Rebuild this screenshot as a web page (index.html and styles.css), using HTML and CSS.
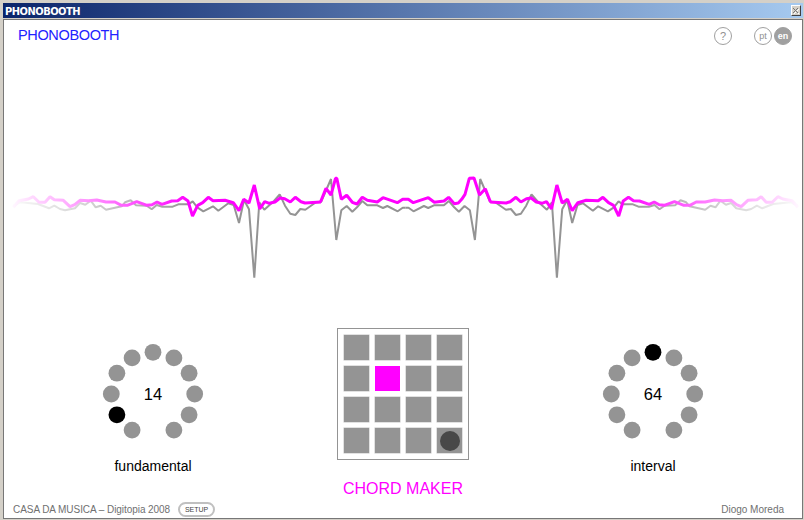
FILE: index.html
```html
<!DOCTYPE html>
<html lang="en">
<head>
<meta charset="utf-8">
<title>PHONOBOOTH</title>
<link rel="stylesheet" href="styles.css">
</head>
<body>
<div class="window">
  <header class="titlebar">
    <span class="title">PHONOBOOTH</span>
    <button class="close" aria-label="Close"><svg width="8" height="8" viewBox="0 0 8 8"><path d="M2 2l5 5M7 2L2 7" stroke="#fff"/><path d="M1 1l5 5M6 1L1 6" stroke="#777"/></svg></button>
  </header>
  <main class="client">
    <div class="top">
      <h1 class="brand">PHONOBOOTH</h1>
      <nav class="tools">
        <span class="round help">?</span>
        <span class="round">pt</span>
        <span class="round active">en</span>
      </nav>
    </div>
    <svg class="wave" width="798" height="130" viewBox="4 165 798 130">
      <defs>
        <linearGradient id="fade" gradientUnits="userSpaceOnUse" x1="8" y1="0" x2="803" y2="0">
          <stop offset="0" stop-color="#fff" stop-opacity="0"/>
          <stop offset=".03" stop-color="#fff" stop-opacity=".15"/>
          <stop offset=".115" stop-color="#fff" stop-opacity=".48"/>
          <stop offset=".23" stop-color="#fff"/>
          <stop offset=".77" stop-color="#fff"/>
          <stop offset=".885" stop-color="#fff" stop-opacity=".48"/>
          <stop offset=".97" stop-color="#fff" stop-opacity=".15"/>
          <stop offset="1" stop-color="#fff" stop-opacity="0"/>
        </linearGradient>
        <mask id="edges" maskUnits="userSpaceOnUse" x="0" y="160" width="804" height="140"><rect x="0" y="160" width="804" height="140" fill="url(#fade)"/></mask>
        <polyline id="grey-half" points="13.3,206 20,202.3 38,204 49,208.3 54.3,205.7 60,209 65,210.3 75,208.3 80,203 85.3,204.7 90.7,200.7 95.7,207.3 100.7,205.7 106,209.7 121.7,206.3 125,202.3 130.7,200.3 136,205.3 146.7,205.7 151.7,209.3 156.7,205 162.3,206.7 172.7,206.7 178.3,204.3 188.3,204.3 192.7,201.3 197.3,207.3 203.3,211.3 213,206.3 218.3,210.7 228.3,203.3 233.7,205 239,223 244,200 249,209.3 254.3,277.7 259.3,202.3 264.3,209.7 274,201 279.7,194.3 285,205.7 290.3,213.7 295.3,215 300.3,209 305.3,209.7 316,202.3 321,202 331,179 336.3,240 341.3,210.3 346.7,206 352.3,211.7 357,207.3 362.3,201 367.3,205.3 377.3,205.3 383,208 387.3,206 397.7,211.3 402.7,207.7 405.6,207.7"/>
        <polyline id="pink-half" points="13.3,207.3 19,200.7 28.3,199 33.3,196.7 39,202.3 45,202.3 50,196.7 54.3,199.7 63.3,200.3 70,206.7 74.7,204.7 80,200.3 88.3,200.7 96.7,200 106,202 115,202 121.3,205.3 127.3,205.3 136.7,201.7 147,205.3 152,204.7 157,202 162,204.3 171.7,201 177.7,200.7 182.7,197.3 188,201 192.5,216 197.7,205.3 202.7,202.7 208.3,197.3 213,200.7 225,200.3 233.3,202.7 239,210.7 243.7,199.3 249,203 254.3,185 259.7,209 264.7,201.7 269.3,203.3 275,202 280,198 284.7,198.7 290.3,202 295.3,197.3 301,201.7 305,203 321,202"/>
      </defs>
      <g mask="url(#edges)" fill="none" stroke-linejoin="bevel">
        <g stroke="#949494" stroke-width="2">
          <use href="#grey-half"/>
          <use href="#grey-half" transform="translate(811.2) scale(-1 1)"/>
        </g>
        <g stroke="#f0f" stroke-width="3">
          <use href="#pink-half"/>
          <use href="#pink-half" transform="translate(811.2) scale(-1 1)"/>
          <polyline points="320.5,202 326,188.3 331,195 335.5,178.3 336.8,178.3 341.3,199.3 346.7,195.3 352.3,202.3 357,204 362.3,197.3 367.3,200.3 377.3,202 383,197.7 397.3,202.7 402.7,199.3 408.3,199.3 413.3,202.7 428.3,197.7 434.3,202.3 444,201 448.6,197.3 454.3,203.7 458.3,203 461.7,199.3 465,194.3 469.3,178.3 474,178 479.5,195 485.3,188.7 490.5,202"/>
        </g>
      </g>
    </svg>
    <div class="controls">
      <section class="dial">
        <div class="ring">
          <svg width="102" height="102" viewBox="-51 -51 102 102" fill="#949494">
            <circle cx="-20.9" cy="36.1" r="8.4"/><circle cx="-36.1" cy="20.8" r="8.4" fill="#000"/><circle cx="-41.7" cy="0" r="8.4"/><circle cx="-36.1" cy="-20.8" r="8.4"/><circle cx="-20.9" cy="-36.1" r="8.4"/><circle cx="0" cy="-41.7" r="8.4"/><circle cx="20.9" cy="-36.1" r="8.4"/><circle cx="36.1" cy="-20.8" r="8.4"/><circle cx="41.7" cy="0" r="8.4"/><circle cx="36.1" cy="20.8" r="8.4"/><circle cx="20.9" cy="36.1" r="8.4"/>
          </svg>
          <span class="value">14</span>
        </div>
        <p class="label">fundamental</p>
      </section>
      <section class="chord">
        <div class="pads">
          <i></i><i></i><i></i><i></i>
          <i></i><i class="on"></i><i></i><i></i>
          <i></i><i></i><i></i><i></i>
          <i></i><i></i><i></i><i class="cursor"></i>
        </div>
        <h2 class="mode">CHORD MAKER</h2>
      </section>
      <section class="dial">
        <div class="ring">
          <svg width="102" height="102" viewBox="-51 -51 102 102" fill="#949494">
            <circle cx="-20.9" cy="36.1" r="8.4"/><circle cx="-36.1" cy="20.8" r="8.4"/><circle cx="-41.7" cy="0" r="8.4"/><circle cx="-36.1" cy="-20.8" r="8.4"/><circle cx="-20.9" cy="-36.1" r="8.4"/><circle cx="0" cy="-41.7" r="8.4" fill="#000"/><circle cx="20.9" cy="-36.1" r="8.4"/><circle cx="36.1" cy="-20.8" r="8.4"/><circle cx="41.7" cy="0" r="8.4"/><circle cx="36.1" cy="20.8" r="8.4"/><circle cx="20.9" cy="36.1" r="8.4"/>
          </svg>
          <span class="value">64</span>
        </div>
        <p class="label">interval</p>
      </section>
    </div>
    <footer class="footer">
      <span class="credit">CASA DA MUSICA – Digitopia 2008</span>
      <button class="setup">SETUP</button>
      <span class="author">Diogo Moreda</span>
    </footer>
  </main>
</div>
</body>
</html>
```

FILE: styles.css
```css
* { box-sizing: border-box; margin: 0; padding: 0; }
body { width: 804px; height: 520px; overflow: hidden; font-family: "Liberation Sans", Arial, sans-serif; }
.window { width: 804px; height: 520px; padding: 3px 1px 1px 3px; background: #d4d0c8; display: flex; flex-direction: column; }
.titlebar { height: 15px; flex: none; display: flex; align-items: center; justify-content: space-between; padding: 0 2px 0 2px; background: linear-gradient(90deg, #0a246a, #a6caf0); }
.title { color: #fff; font: bold 11px/15px "DejaVu Sans Condensed", "DejaVu Sans", sans-serif; letter-spacing: -0.5px; padding-top: 1px; }
.close { width: 10px; height: 11px; background: #d4d0c8; border: 1px solid; border-color: #fff #404040 #404040 #fff; line-height: 0; }
.client { flex: 1; margin-top: 1px; border: 1px solid #777; background: #fff; display: flex; flex-direction: column; }
.top { height: 145px; display: flex; justify-content: space-between; align-items: flex-start; padding: 7px 10px 0 14px; }
.brand { font-weight: normal; font-size: 14.5px; line-height: 17px; color: #22f; letter-spacing: -0.35px; }
.tools { display: flex; }
.round { width: 18px; height: 18px; margin-left: 2px; border: 1px solid #a0a0a0; border-radius: 50%; font-size: 9px; line-height: 16px; text-align: center; color: #909090; }
.help { margin-right: 20px; font-size: 11px; }
.active { background: #a0a0a0; color: #fff; font-weight: bold; }
.wave { flex: none; display: block; }
.controls { flex: none; height: 205px; display: flex; justify-content: space-between; padding: 33px 98px 0 98px; }
.dial { width: 102px; padding-top: 15px; text-align: center; }
.ring { display: grid; place-items: center; height: 102px; }
.ring > * { grid-area: 1 / 1; }
.value { font-size: 16.5px; line-height: 20px; }
.label { margin-top: 13px; font-size: 14px; line-height: 17px; }
.chord { width: 132px; text-align: center; }
.pads { width: 132px; height: 132px; border: 1px solid #949494; padding: 5.6px; display: grid; grid-template-columns: repeat(4, 25px); grid-template-rows: repeat(4, 25px); gap: 6.3px; }
.pads i { background: #949494; box-shadow: 0 0 0 0.5px #c4c4c4; display: grid; place-items: center; }
.pads .on { background: #f0f; box-shadow: none; }
.cursor::after { content: ""; width: 20px; height: 20px; border-radius: 50%; background: #484848; }
.mode { margin-top: 19px; font-weight: normal; font-size: 16px; line-height: 19px; color: #f0f; white-space: nowrap; }
.footer { flex: 1; display: flex; align-items: center; padding: 0 18px 0 9px; font-size: 10px; color: #707070; }
.credit { letter-spacing: -0.06px; }
.setup { width: 37px; height: 15px; margin-left: 8px; border: 2px solid #c0c0c0; border-radius: 8px; background: #fff; font: 7px/11px "Liberation Sans", sans-serif; color: #444; }
.author { margin-left: auto; }
```
